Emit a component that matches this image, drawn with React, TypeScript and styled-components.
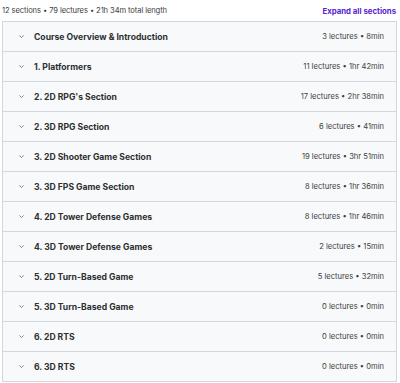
import React from "react";
import styled, { createGlobalStyle } from "styled-components";

const Global = createGlobalStyle`
  html, body { margin: 0; padding: 0; background: #ffffff; }
  body { font-family: Inter, "Noto Sans", sans-serif; }
`;

const Page = styled.div`
  width: 400px;
  padding: 0 3px 0 2px;
  box-sizing: border-box;
`;

const Header = styled.div`
  display: flex;
  justify-content: space-between;
  align-items: center;
  height: 21px;
  padding-right: 1px;
`;

const Summary = styled.span`
  font-size: 7.6px;
  color: #3e4143;
  letter-spacing: -0.1px;
`;

const ExpandLink = styled.span`
  font-size: 7.8px;
  font-weight: 700;
  color: #5624d0;
`;

const List = styled.div`
  border: 1px solid #d1d7dc;
  border-bottom: none;
`;

const Row = styled.div`
  display: flex;
  align-items: center;
  height: 29px;
  background: #f7f9fa;
  border-bottom: 1px solid #d1d7dc;
  padding: 0 12px 0 15px;
`;

const Chevron = styled.svg`
  width: 7px;
  height: 7px;
  flex: none;
  margin-right: 9px;
`;

const Title = styled.span`
  flex: 1;
  font-size: 8.6px;
  font-weight: 700;
  color: #2d2f31;
`;

const Meta = styled.span`
  font-size: 7.6px;
  color: #3e4143;
`;

const sections: [string, string][] = [
  ["Course Overview & Introduction", "3 lectures • 8min"],
  ["1. Platformers", "11 lectures • 1hr 42min"],
  ["2. 2D RPG's Section", "17 lectures • 2hr 38min"],
  ["2. 3D RPG Section", "6 lectures • 41min"],
  ["3. 2D Shooter Game Section", "19 lectures • 3hr 51min"],
  ["3. 3D FPS Game Section", "8 lectures • 1hr 36min"],
  ["4. 2D Tower Defense Games", "8 lectures • 1hr 46min"],
  ["4. 3D Tower Defense Games", "2 lectures • 15min"],
  ["5. 2D Turn-Based Game", "5 lectures • 32min"],
  ["5. 3D Turn-Based Game", "0 lectures • 0min"],
  ["6. 2D RTS", "0 lectures • 0min"],
  ["6. 3D RTS", "0 lectures • 0min"],
];

export default function App() {
  return (
    <Page>
      <Global />
      <Header>
        <Summary>12 sections • 79 lectures • 21h 34m total length</Summary>
        <ExpandLink>Expand all sections</ExpandLink>
      </Header>
      <List>
        {sections.map(([t, m]) => (
          <Row key={t}>
            <Chevron viewBox="0 0 10 10">
              <path d="M2 3.5 L5 6.5 L8 3.5" fill="none" stroke="#6a6f73" strokeWidth="1.2" />
            </Chevron>
            <Title>{t}</Title>
            <Meta>{m}</Meta>
          </Row>
        ))}
      </List>
    </Page>
  );
}
